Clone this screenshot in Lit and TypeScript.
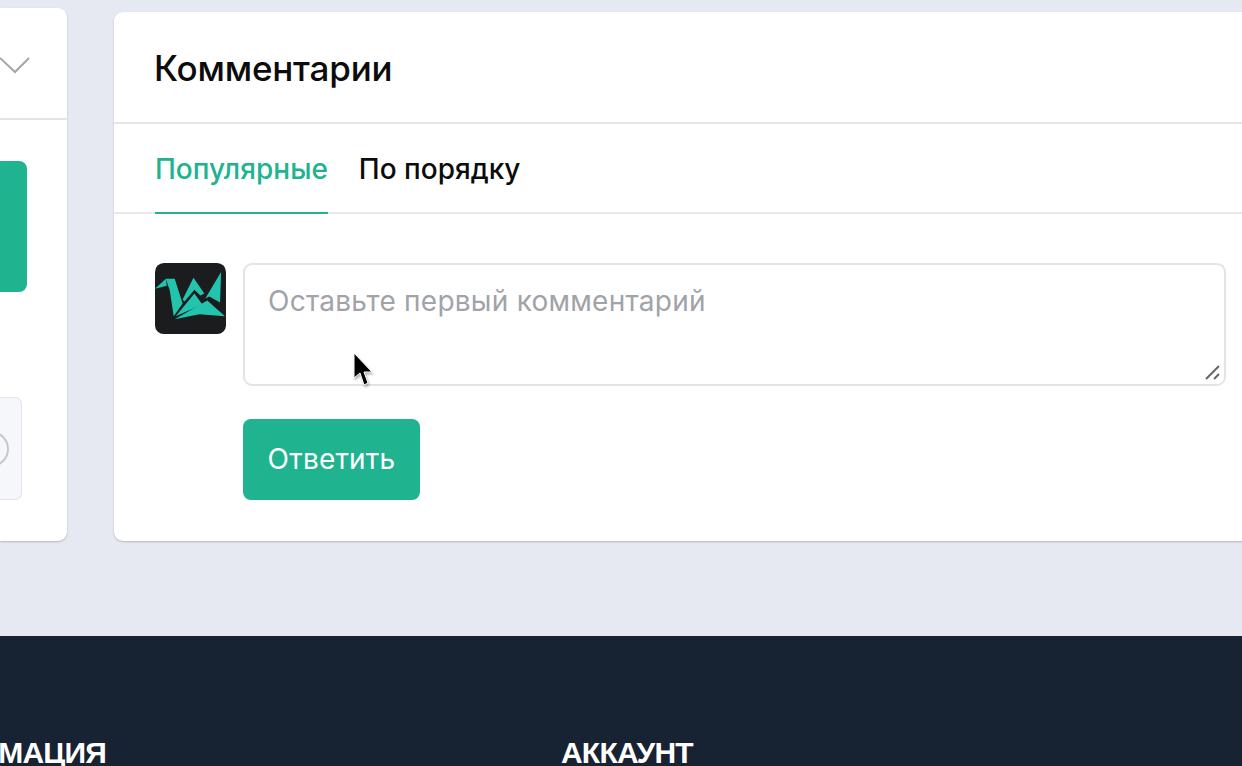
import { LitElement, html, css } from 'lit';
import { customElement } from 'lit/decorators.js';

@customElement('app-root')
export class AppRoot extends LitElement {
  static styles = css`
    :host {
      display: block;
      width: 1242px;
      height: 766px;
      overflow: hidden;
      background: #e6e9f2;
      font-family: Inter, 'Noto Sans', sans-serif;
      color: #0c0c0c;
    }
    .main {
      display: flex;
      align-items: flex-start;
      gap: 47px;
      height: 636px;
      padding-top: 8px;
      box-sizing: border-box;
    }
    .side {
      flex: none;
      width: 67px;
      height: 533px;
      background: #fff;
      border-radius: 0 9px 9px 0;
      box-shadow: 0 1px 2px rgba(0, 0, 0, 0.22);
    }
    .side-head {
      display: flex;
      align-items: center;
      height: 112px;
      border-bottom: 2px solid #e4e4e6;
      box-sizing: border-box;
    }
    .side-head svg {
      display: block;
      margin-top: 4px;
    }
    .side-btn {
      width: 27px;
      height: 131px;
      margin-top: 41px;
      background: #20b38f;
      border-radius: 0 8px 8px 0;
    }
    .side-box {
      display: flex;
      align-items: center;
      justify-content: flex-end;
      width: 22px;
      height: 103px;
      margin-top: 105px;
      overflow: hidden;
      background: #f6f7fb;
      border: 1px solid #e2e4ea;
      border-left: 0;
      border-radius: 0 7px 7px 0;
      box-sizing: border-box;
    }
    .side-circle {
      flex: none;
      width: 36px;
      height: 36px;
      margin-right: 12px;
      border: 2px solid #c4c8cc;
      border-radius: 50%;
      box-sizing: border-box;
    }
    .card {
      flex: none;
      width: 1153px;
      height: 529px;
      margin-top: 4px;
      background: #fff;
      border-radius: 9px 0 0 9px;
      box-shadow: 0 1px 2px rgba(0, 0, 0, 0.22);
    }
    .card-head {
      display: flex;
      align-items: center;
      height: 112px;
      padding: 2px 0 0 40px;
      border-bottom: 2px solid #e6e6e8;
      box-sizing: border-box;
    }
    .card-head h2 {
      margin: 0;
      font-size: 35px;
      font-weight: 500;
      letter-spacing: -0.2px;
      line-height: 1;
    }
    .tabs {
      display: flex;
      gap: 31px;
      height: 90px;
      padding-left: 41px;
      border-bottom: 2px solid #e9e9eb;
      box-sizing: border-box;
    }
    .tab {
      display: flex;
      align-items: center;
      height: 90px;
      font-size: 28px;
      font-weight: 500;
      box-sizing: border-box;
    }
    .tab.active {
      color: #20b38f;
      box-shadow: inset 0 -2px 0 #20b38f;
    }
    .form {
      display: grid;
      grid-template-columns: 71px 983px;
      column-gap: 17px;
      row-gap: 33px;
      padding: 49px 0 0 41px;
    }
    .avatar {
      display: block;
      width: 71px;
      height: 71px;
    }
    .input {
      position: relative;
      height: 123px;
      padding: 19px 23px;
      font-size: 28px;
      letter-spacing: 0.25px;
      line-height: 34px;
      color: #a0a3a8;
      border: 2px solid #e4e4e6;
      border-radius: 9px;
      box-sizing: border-box;
    }
    .grip {
      position: absolute;
      right: 1px;
      bottom: 1px;
    }
    .reply {
      grid-column: 2;
      display: flex;
      align-items: center;
      justify-content: center;
      width: 177px;
      height: 81px;
      padding-bottom: 2px;
      font-size: 28px;
      letter-spacing: 0.2px;
      color: #fff;
      background: #20b38f;
      border-radius: 8px;
      box-sizing: border-box;
    }
    .cursor {
      position: absolute;
      left: 352px;
      top: 352px;
      filter: drop-shadow(1px 2px 1px rgba(0, 0, 0, 0.3));
    }
    .footer {
      display: flex;
      gap: 455px;
      height: 130px;
      padding-top: 101px;
      background: #172232;
      box-sizing: border-box;
      overflow: hidden;
    }
    .footer h3 {
      margin: 0;
      font-family: 'Liberation Sans', sans-serif;
      font-size: 30px;
      font-weight: 700;
      letter-spacing: -0.8px;
      line-height: 32px;
      color: #fff;
      white-space: nowrap;
    }
    .footer-col {
      display: flex;
      justify-content: flex-end;
      flex: none;
      width: 106px;
    }
  `;

  render() {
    return html`
      <div class="main">
        <aside class="side">
          <div class="side-head">
            <svg width="31" height="20" viewBox="0 0 31 20" fill="none">
              <path d="M0 3 15 17 29 3" stroke="#a3a5a8" stroke-width="2" />
            </svg>
          </div>
          <div class="side-btn"></div>
          <div class="side-box"><div class="side-circle"></div></div>
        </aside>
        <section class="card">
          <div class="card-head"><h2>Комментарии</h2></div>
          <div class="tabs">
            <div class="tab active">Популярные</div>
            <div class="tab">По порядку</div>
          </div>
          <div class="form">
            <svg class="avatar" viewBox="0 0 72 72">
              <rect width="72" height="72" rx="9" fill="#1b1c1e" />
              <g fill="#22c4ad">
                <path d="M0 26 11 16 12 23Z" />
                <path d="M11 16H20L28 41 19 54 15 28Z" />
                <path d="M28 37 39 15 50 31 46 33 40 27 30 39Z" />
                <path d="M21 54 40 31 48 42Z" />
                <path d="M51 36 67 9 66 40 55 34Z" />
                <path d="M20 57 53 38 71 54 45 52Z" />
              </g>
            </svg>
            <div class="input">
              Оставьте первый комментарий
              <svg class="grip" width="20" height="20" viewBox="0 0 20 20" fill="none" stroke="#666" stroke-width="2">
                <path d="M3 16 16 3M11 16 16 11" />
              </svg>
            </div>
            <div class="reply">Ответить</div>
          </div>
        </section>
      </div>
      <footer class="footer">
        <div class="footer-col"><h3>ИНФОРМАЦИЯ</h3></div>
        <h3>АККАУНТ</h3>
      </footer>
      <svg class="cursor" width="22" height="36" viewBox="0 0 22 36">
        <path d="M2 1V26L8 21 12 33 16 31 12 20H20Z" fill="#000" stroke="#fff" stroke-width="1" />
      </svg>
    `;
  }
}
